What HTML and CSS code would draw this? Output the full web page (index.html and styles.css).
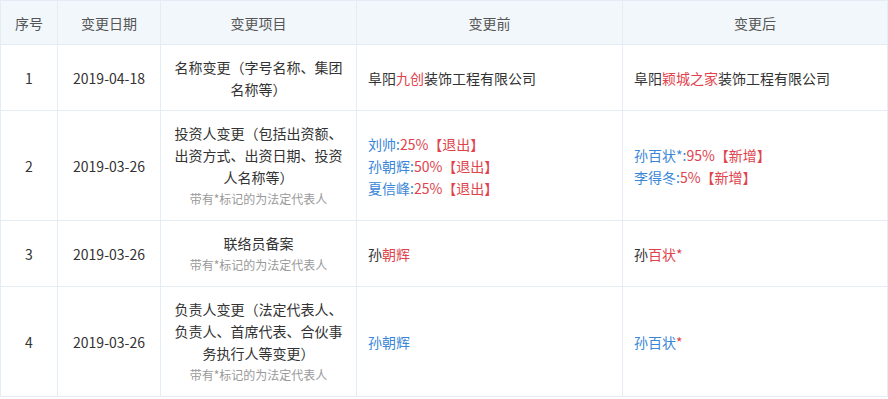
FILE: index.html
```html
<!DOCTYPE html>
<html lang="zh-CN">
<head>
  <meta charset="UTF-8">
  <title>变更记录</title>
  <link rel="stylesheet" href="styles.css">
</head>
<body>
  <table class="change-table">
    <colgroup>
      <col class="c-no">
      <col class="c-date">
      <col class="c-item">
      <col class="c-before">
      <col class="c-after">
    </colgroup>
    <thead>
      <tr>
        <th>序号</th>
        <th>变更日期</th>
        <th>变更项目</th>
        <th>变更前</th>
        <th>变更后</th>
      </tr>
    </thead>
    <tbody>
      <tr>
        <td class="center">1</td>
        <td class="center">2019-04-18</td>
        <td class="center">名称变更（字号名称、集团名称等）</td>
        <td>阜阳<em class="red">九创</em>装饰工程有限公司</td>
        <td>阜阳<em class="red">颖城之家</em>装饰工程有限公司</td>
      </tr>
      <tr>
        <td class="center">2</td>
        <td class="center">2019-03-26</td>
        <td class="center">投资人变更（包括出资额、出资方式、出资日期、投资人名称等）<div class="tip">带有*标记的为法定代表人</div></td>
        <td>
          <div><span class="blue">刘帅:</span><span class="red">25%【退出】</span></div>
          <div><span class="blue">孙朝辉:</span><span class="red">50%【退出】</span></div>
          <div><span class="blue">夏信峰:</span><span class="red">25%【退出】</span></div>
        </td>
        <td>
          <div><span class="blue">孙百状*:</span><span class="red">95%【新增】</span></div>
          <div><span class="blue">李得冬:</span><span class="red">5%【新增】</span></div>
        </td>
      </tr>
      <tr>
        <td class="center">3</td>
        <td class="center">2019-03-26</td>
        <td class="center">联络员备案<div class="tip">带有*标记的为法定代表人</div></td>
        <td>孙<em class="red">朝辉</em></td>
        <td>孙<em class="red">百状*</em></td>
      </tr>
      <tr>
        <td class="center">4</td>
        <td class="center">2019-03-26</td>
        <td class="center">负责人变更（法定代表人、负责人、首席代表、合伙事务执行人等变更）<div class="tip">带有*标记的为法定代表人</div></td>
        <td><span class="blue">孙朝辉</span></td>
        <td><span class="blue">孙百状</span><span class="red">*</span></td>
      </tr>
    </tbody>
  </table>
</body>
</html>
```

FILE: styles.css
```css
body { margin: 0; background: #fff; font-family: "Microsoft YaHei", "Noto Sans CJK SC", sans-serif; font-size: 14px; color: #333; }
.change-table { width: 887px; border-collapse: collapse; table-layout: fixed; }
.c-no { width: 57px; }
.c-date { width: 103px; }
.c-item { width: 196px; }
.c-before { width: 266px; }
.c-after { width: 265px; }
.change-table th,
.change-table td { border: 1px solid #e4edf5; line-height: 22px; padding: 11px 10px 10px; vertical-align: middle; }
.change-table th { background: #f2f7fc; color: #555; font-weight: normal; text-align: center; }
.change-table td { text-align: left; padding-left: 11px; }
.change-table td.center { text-align: center; padding-left: 10px; }
.tip { font-size: 12px; color: #999; }
em { font-style: normal; }
.red { color: #e0434c; }
.blue { color: #3a87d8; }
```
